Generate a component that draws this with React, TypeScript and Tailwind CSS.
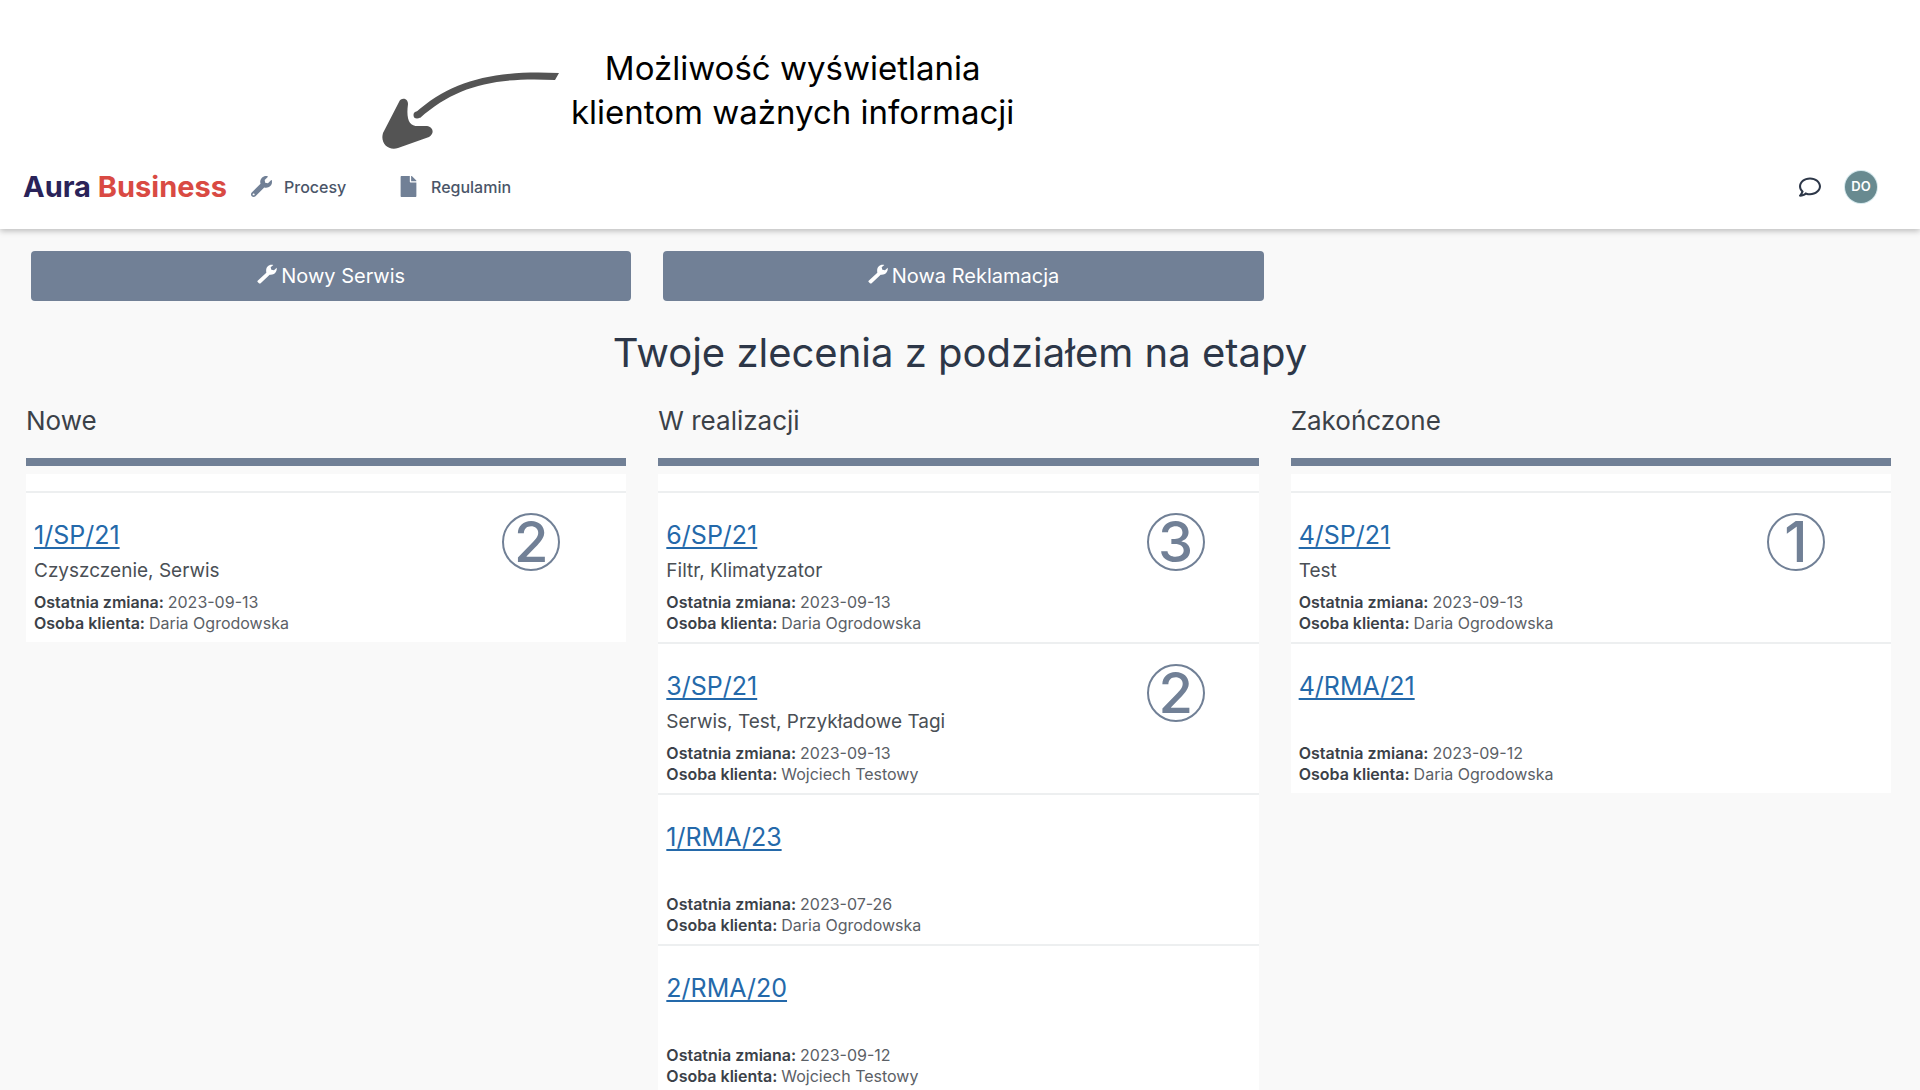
import { FaFile, FaRegComment, FaWrench } from "react-icons/fa";

interface Order {
  number: string;
  tags: string;
  changed: string;
  person: string;
  count?: number;
}

interface Stage {
  name: string;
  badgePadding: string;
  orders: Order[];
}

const stages: Stage[] = [
  {
    name: "Nowe",
    badgePadding: "pr-[66px]",
    orders: [
      { number: "1/SP/21", tags: "Czyszczenie, Serwis", changed: "2023-09-13", person: "Daria Ogrodowska", count: 2 },
    ],
  },
  {
    name: "W realizacji",
    badgePadding: "pr-[54px]",
    orders: [
      { number: "6/SP/21", tags: "Filtr, Klimatyzator", changed: "2023-09-13", person: "Daria Ogrodowska", count: 3 },
      { number: "3/SP/21", tags: "Serwis, Test, Przykładowe Tagi", changed: "2023-09-13", person: "Wojciech Testowy", count: 2 },
      { number: "1/RMA/23", tags: "", changed: "2023-07-26", person: "Daria Ogrodowska" },
      { number: "2/RMA/20", tags: "", changed: "2023-09-12", person: "Wojciech Testowy" },
    ],
  },
  {
    name: "Zakończone",
    badgePadding: "pr-[66px]",
    orders: [
      { number: "4/SP/21", tags: "Test", changed: "2023-09-13", person: "Daria Ogrodowska", count: 1 },
      { number: "4/RMA/21", tags: "", changed: "2023-09-12", person: "Daria Ogrodowska" },
    ],
  },
];

function Arrow() {
  return (
    <svg className="w-[178px] h-20 shrink-0" viewBox="381 70 178 80" aria-hidden="true">
      <path d="M415 113C452 80 494 70 559 73L555 80C494 77 456 86 420 118Z" fill="#545454" />
      <circle cx="417" cy="115" r="3.5" fill="#545454" />
      <path
        d="M399 102C401 97 408 98 408 104C406 119 409 126 418 126L427 126C433 127 435 133 429 137L398 148C388 151 380 143 383 133Z"
        fill="#545454"
      />
    </svg>
  );
}

function SolidWrench() {
  return (
    <svg className="size-5 mb-1" viewBox="0 0 60 60" fill="currentColor" aria-hidden="true">
      <path
        d="M2 50L28 26C25 11 34 0 49 3L41 10L43 17L51 19L59 11C61 24 52 34 38 32L11 58Q8 60 5 57L2 54Q0 52 2 50Z"
      />
    </svg>
  );
}

function OrderCard({ order, badgePadding }: { order: Order; badgePadding: string }) {
  return (
    <li className={`h-[151px] flex items-start justify-between border-t-2 border-[#edeff0] bg-white pl-2 ${badgePadding}`}>
      <div className="pt-6">
        <a href="#" className="block w-fit text-[25px] leading-9 text-[#2469aa] underline decoration-2 underline-offset-3">
          {order.number}
        </a>
        <p className="h-[39px] pt-1 text-[19px] leading-7 text-[#4a4f55]">{order.tags}</p>
        <dl className="text-base leading-[21px] text-[#5b6066]">
          <div className="flex gap-1">
            <dt className="font-semibold text-[#3b4148]">Ostatnia zmiana:</dt>
            <dd>{order.changed}</dd>
          </div>
          <div className="flex gap-1">
            <dt className="font-semibold text-[#3b4148]">Osoba klienta:</dt>
            <dd>{order.person}</dd>
          </div>
        </dl>
      </div>
      {order.count && (
        <span className="mt-5 size-[58px] flex items-center justify-center rounded-full border-2 border-[#718096] text-[56px] leading-none font-medium text-[#718096]">
          {order.count}
        </span>
      )}
    </li>
  );
}

export default function App() {
  return (
    <div className="min-h-screen bg-[#f9f9f9] font-['Inter',sans-serif] text-[#3b4148]">
      <div className="bg-white shadow-[0_2px_6px_rgba(0,0,0,0.25)]">
        <div className="flex items-start gap-3 pl-[381px] pt-[46px]">
          <div className="pt-6">
            <Arrow />
          </div>
          <p className="text-center text-[33px] leading-[44px] text-black">
            Możliwość wyświetlania
            <br />
            klientom ważnych informacji
          </p>
        </div>
        <header className="h-[79px] flex items-center justify-between pl-[23px] pr-[43px] pb-[6px]">
          <nav className="flex items-center">
            <a href="#" className="w-[228px] whitespace-nowrap text-[29px] leading-8 font-bold text-[#2a2359]">
              Aura <span className="text-[#d94a43]">Business</span>
            </a>
            <a href="#" className="w-[147px] flex items-center gap-3 text-base font-medium text-[#4a5568]">
              <FaWrench className="size-[21px] text-[#718096]" />
              Procesy
            </a>
            <a href="#" className="flex items-center gap-3 text-base font-medium text-[#4a5568]">
              <FaFile className="size-[21px] text-[#718096]" />
              Regulamin
            </a>
          </nav>
          <div className="flex items-center gap-6">
            <button type="button" aria-label="Wiadomości">
              <FaRegComment className="size-[22px] text-[#2d3748]" />
            </button>
            <button type="button" className="size-8 rounded-full bg-[#688a90] ring-1 ring-[#d5e8ec] text-[13px] font-semibold text-white">
              DO
            </button>
          </div>
        </header>
      </div>
      <main>
        <div className="grid grid-cols-3 gap-8 pt-[22px] pl-[31px] pr-6">
          {["Nowy Serwis", "Nowa Reklamacja"].map((label) => (
            <button
              key={label}
              type="button"
              className="h-[50px] flex items-center justify-center gap-1 rounded bg-[#718096] text-[20px] text-white"
            >
              <SolidWrench />
              {label}
            </button>
          ))}
        </div>
        <h1 className="pt-6 text-center text-[40px] leading-14 text-[#2d3748]">Twoje zlecenia z podziałem na etapy</h1>
        <div className="grid grid-cols-3 items-start gap-8 pt-5 pl-[26px] pr-[29px]">
          {stages.map((stage) => (
            <section key={stage.name}>
              <h2 className="h-[57px] border-b-8 box-content border-[#718096] text-[26px] leading-10">{stage.name}</h2>
              <ul className="mt-2 border-t-[17px] border-white">
                {stage.orders.map((order) => (
                  <OrderCard key={order.number} order={order} badgePadding={stage.badgePadding} />
                ))}
              </ul>
            </section>
          ))}
        </div>
      </main>
    </div>
  );
}
